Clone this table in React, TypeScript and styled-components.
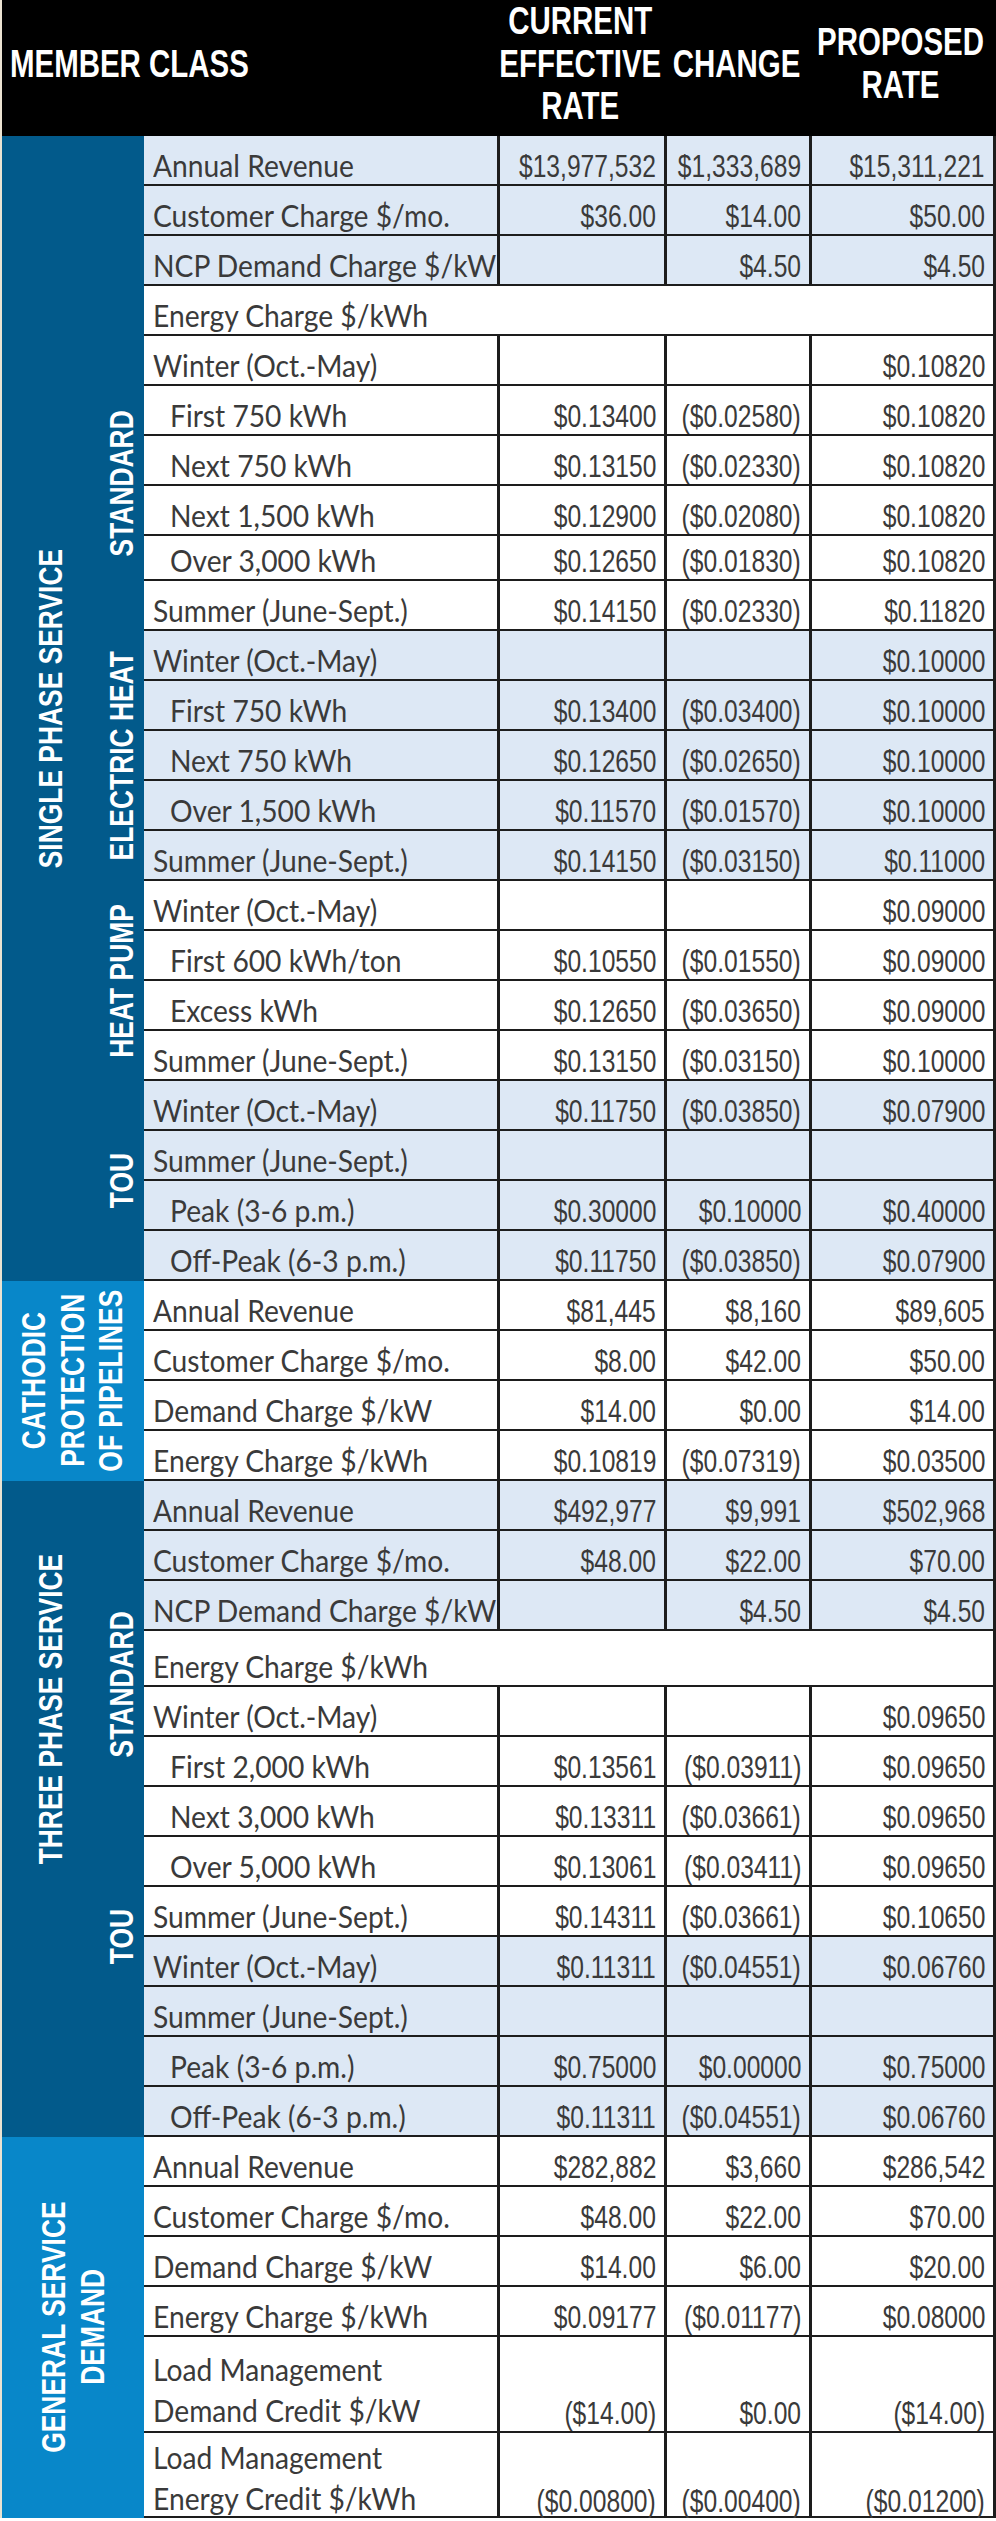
import React from 'react';
import styled, { createGlobalStyle } from 'styled-components';

const C = {
  dark: '#025a8b',
  bright: '#0887c9',
  tint: '#dde8f5',
  line: '#1d1d1d',
  text: '#3a3a3a',
  edge: '#ebe3d2',
};

const ARIAL = '"Liberation Sans", Arial, sans-serif';
const HUMAN = 'Lato, "Open Sans", "Liberation Sans", sans-serif';

const GlobalStyle = createGlobalStyle`
  html, body { margin: 0; padding: 0; background: #ffffff; }
  body { font-family: ${HUMAN}; }
`;

const Page = styled.div`
  width: 996px;
  box-sizing: border-box;
  border-left: 2px solid ${C.edge};
  background: #ffffff;
`;

const Header = styled.header`
  display: grid;
  grid-template-columns: 495px 167px 145px 184px 3px;
  height: 136px;
  background: #000000;
  color: #ffffff;
  font-family: ${ARIAL};
  font-weight: 700;
  font-size: 39px;
  line-height: 42.5px;
`;

const HeadCell = styled.div<{ $left?: boolean }>`
  display: flex;
  align-items: center;
  justify-content: ${(p) => (p.$left ? 'flex-start' : 'center')};
  text-align: center;
  padding: 0 0 12px ${(p) => (p.$left ? '8px' : '0')};
  white-space: nowrap;
  min-width: 0;
`;

const HeadText = styled.span<{ $left?: boolean }>`
  display: inline-block;
  transform: scaleX(0.755);
  transform-origin: ${(p) => (p.$left ? 'left center' : 'center center')};
`;

const Group = styled.section`
  display: flex;
`;

const Side = styled.div<{ $tone: 'dark' | 'bright'; $rows: string }>`
  width: 142px;
  flex: none;
  display: grid;
  grid-template-columns: 98px 44px;
  grid-template-rows: ${(p) => p.$rows};
  background: ${(p) => (p.$tone === 'dark' ? C.dark : C.bright)};
  color: #ffffff;
  font-family: ${ARIAL};
  font-weight: 700;
  font-size: 33px;
  line-height: 38.5px;
`;

const SideSlot = styled.div<{ $col: string; $row: string }>`
  grid-column: ${(p) => p.$col};
  grid-row: ${(p) => p.$row};
  display: flex;
  align-items: center;
  justify-content: center;
  min-height: 0;
  overflow: visible;
`;

const Vertical = styled.span`
  writing-mode: vertical-rl;
  transform: rotate(180deg) scaleY(0.8);
  text-align: center;
  white-space: nowrap;
`;

const Rows = styled.div`
  flex: 1;
  display: flex;
  flex-direction: column;
  border-right: 3px solid ${C.line};
`;

const Row = styled.div<{ $h: number; $tint?: boolean; $span?: boolean }>`
  display: grid;
  grid-template-columns: ${(p) => (p.$span ? '1fr' : '353px 167px 145px 184px')};
  height: ${(p) => p.$h}px;
  box-sizing: border-box;
  border-bottom: 2px solid ${C.line};
  background: ${(p) => (p.$tint ? C.tint : '#ffffff')};
  color: ${C.text};
`;

const LabelCell = styled.div<{ $indent?: boolean; $double?: boolean; $padTop?: number }>`
  display: flex;
  align-items: ${(p) => (p.$double ? 'flex-start' : 'flex-end')};
  padding: ${(p) => (p.$double ? `${p.$padTop ?? 12}px 0 0` : '0 0 3px')}
    ${(p) => (p.$indent ? '26px' : '9px')};
  font-family: ${HUMAN};
  font-size: 31px;
  line-height: ${(p) => (p.$double ? '41px' : '32px')};
  white-space: nowrap;
  min-width: 0;
`;

const LabelText = styled.span`
  display: inline-block;
  transform: scaleX(0.91);
  transform-origin: left center;
`;

const ValueCell = styled.div`
  display: flex;
  align-items: flex-end;
  justify-content: flex-end;
  border-left: 3px solid ${C.line};
  padding: 0 8px 2px 0;
  font-family: ${ARIAL};
  font-size: 32px;
  line-height: 32px;
  white-space: nowrap;
  min-width: 0;
`;

const Num = styled.span`
  display: inline-block;
  transform: scaleX(0.77);
  transform-origin: right center;
`;

type RowData = {
  label: string | [string, string];
  indent?: boolean;
  span?: boolean;
  values?: [string, string, string];
  h?: number;
  tint?: boolean;
  padTop?: number;
};

type Sub = { label: string; from: number; to: number };

type GroupData = {
  tone: 'dark' | 'bright';
  main: string[];
  mainFrom: number;
  mainTo: number;
  wide?: boolean;
  subs: Sub[];
  rows: RowData[];
};

const E: [string, string, string] = ['', '', ''];

const groups: GroupData[] = [
  {
    tone: 'dark',
    main: ['SINGLE PHASE SERVICE'],
    mainFrom: 1,
    mainTo: 23,
    subs: [
      { label: 'STANDARD', from: 5, to: 10 },
      { label: 'ELECTRIC HEAT', from: 11, to: 15 },
      { label: 'HEAT PUMP', from: 16, to: 19 },
      { label: 'TOU', from: 20, to: 23 },
    ],
    rows: [
      { label: 'Annual Revenue', values: ['$13,977,532', '$1,333,689', '$15,311,221'], tint: true },
      { label: 'Customer Charge $/mo.', values: ['$36.00', '$14.00', '$50.00'], tint: true },
      { label: 'NCP Demand Charge $/kW', values: ['', '$4.50', '$4.50'], tint: true },
      { label: 'Energy Charge $/kWh', span: true },
      { label: 'Winter (Oct.-May)', values: ['', '', '$0.10820'] },
      { label: 'First 750 kWh', indent: true, values: ['$0.13400', '($0.02580)', '$0.10820'] },
      { label: 'Next 750 kWh', indent: true, values: ['$0.13150', '($0.02330)', '$0.10820'] },
      { label: 'Next 1,500 kWh', indent: true, values: ['$0.12900', '($0.02080)', '$0.10820'] },
      { label: 'Over 3,000 kWh', indent: true, values: ['$0.12650', '($0.01830)', '$0.10820'], h: 45 },
      { label: 'Summer (June-Sept.)', values: ['$0.14150', '($0.02330)', '$0.11820'] },
      { label: 'Winter (Oct.-May)', values: ['', '', '$0.10000'], tint: true },
      { label: 'First 750 kWh', indent: true, values: ['$0.13400', '($0.03400)', '$0.10000'], tint: true },
      { label: 'Next 750 kWh', indent: true, values: ['$0.12650', '($0.02650)', '$0.10000'], tint: true },
      { label: 'Over 1,500 kWh', indent: true, values: ['$0.11570', '($0.01570)', '$0.10000'], tint: true },
      { label: 'Summer (June-Sept.)', values: ['$0.14150', '($0.03150)', '$0.11000'], tint: true },
      { label: 'Winter (Oct.-May)', values: ['', '', '$0.09000'] },
      { label: 'First 600 kWh/ton', indent: true, values: ['$0.10550', '($0.01550)', '$0.09000'] },
      { label: 'Excess kWh', indent: true, values: ['$0.12650', '($0.03650)', '$0.09000'] },
      { label: 'Summer (June-Sept.)', values: ['$0.13150', '($0.03150)', '$0.10000'] },
      { label: 'Winter (Oct.-May)', values: ['$0.11750', '($0.03850)', '$0.07900'], tint: true },
      { label: 'Summer (June-Sept.)', values: E, tint: true },
      { label: 'Peak (3-6 p.m.)', indent: true, values: ['$0.30000', '$0.10000', '$0.40000'], tint: true },
      { label: 'Off-Peak (6-3 p.m.)', indent: true, values: ['$0.11750', '($0.03850)', '$0.07900'], tint: true },
    ],
  },
  {
    tone: 'bright',
    main: ['CATHODIC', 'PROTECTION', 'OF PIPELINES'],
    mainFrom: 1,
    mainTo: 4,
    wide: true,
    subs: [],
    rows: [
      { label: 'Annual Revenue', values: ['$81,445', '$8,160', '$89,605'] },
      { label: 'Customer Charge $/mo.', values: ['$8.00', '$42.00', '$50.00'] },
      { label: 'Demand Charge $/kW', values: ['$14.00', '$0.00', '$14.00'] },
      { label: 'Energy Charge $/kWh', values: ['$0.10819', '($0.07319)', '$0.03500'] },
    ],
  },
  {
    tone: 'dark',
    main: ['THREE PHASE SERVICE'],
    mainFrom: 1,
    mainTo: 9,
    subs: [
      { label: 'STANDARD', from: 3, to: 6 },
      { label: 'TOU', from: 9, to: 10 },
    ],
    rows: [
      { label: 'Annual Revenue', values: ['$492,977', '$9,991', '$502,968'], tint: true },
      { label: 'Customer Charge $/mo.', values: ['$48.00', '$22.00', '$70.00'], tint: true },
      { label: 'NCP Demand Charge $/kW', values: ['', '$4.50', '$4.50'], tint: true },
      { label: 'Energy Charge $/kWh', span: true, h: 56 },
      { label: 'Winter (Oct.-May)', values: ['', '', '$0.09650'] },
      { label: 'First 2,000 kWh', indent: true, values: ['$0.13561', '($0.03911)', '$0.09650'] },
      { label: 'Next 3,000 kWh', indent: true, values: ['$0.13311', '($0.03661)', '$0.09650'] },
      { label: 'Over 5,000 kWh', indent: true, values: ['$0.13061', '($0.03411)', '$0.09650'] },
      { label: 'Summer (June-Sept.)', values: ['$0.14311', '($0.03661)', '$0.10650'] },
      { label: 'Winter (Oct.-May)', values: ['$0.11311', '($0.04551)', '$0.06760'], tint: true },
      { label: 'Summer (June-Sept.)', values: E, tint: true },
      { label: 'Peak (3-6 p.m.)', indent: true, values: ['$0.75000', '$0.00000', '$0.75000'], tint: true },
      { label: 'Off-Peak (6-3 p.m.)', indent: true, values: ['$0.11311', '($0.04551)', '$0.06760'], tint: true },
    ],
  },
  {
    tone: 'bright',
    main: ['GENERAL SERVICE', 'DEMAND'],
    mainFrom: 1,
    mainTo: 6,
    wide: true,
    subs: [],
    rows: [
      { label: 'Annual Revenue', values: ['$282,882', '$3,660', '$286,542'] },
      { label: 'Customer Charge $/mo.', values: ['$48.00', '$22.00', '$70.00'] },
      { label: 'Demand Charge $/kW', values: ['$14.00', '$6.00', '$20.00'] },
      { label: 'Energy Charge $/kWh', values: ['$0.09177', '($0.01177)', '$0.08000'] },
      {
        label: ['Load Management', 'Demand Credit $/kW'],
        values: ['($14.00)', '$0.00', '($14.00)'],
        h: 96,
        padTop: 12,
      },
      {
        label: ['Load Management', 'Energy Credit $/kWh'],
        values: ['($0.00800)', '($0.00400)', '($0.01200)'],
        h: 85,
        padTop: 4,
      },
    ],
  },
];

const ROW_H = 50;

function Label({ text }: { text: string | [string, string] }) {
  if (typeof text === 'string') return <LabelText>{text}</LabelText>;
  return (
    <LabelText>
      {text[0]}
      <br />
      {text[1]}
    </LabelText>
  );
}

function TableGroup({ g }: { g: GroupData }) {
  const heights = g.rows.map((r) => r.h ?? ROW_H);
  const template = heights.map((h) => `${h}px`).join(' ');
  return (
    <Group>
      <Side $tone={g.tone} $rows={template}>
        <SideSlot $col={g.wide ? '1 / 3' : '1 / 2'} $row={`${g.mainFrom} / ${g.mainTo + 1}`}>
          <Vertical>
            {g.main.map((line, i) => (
              <React.Fragment key={line}>
                {i > 0 && <br />}
                {line}
              </React.Fragment>
            ))}
          </Vertical>
        </SideSlot>
        {g.subs.map((s) => (
          <SideSlot key={s.label} $col="2 / 3" $row={`${s.from} / ${s.to + 1}`}>
            <Vertical>{s.label}</Vertical>
          </SideSlot>
        ))}
      </Side>
      <Rows>
        {g.rows.map((r, i) => {
          const double = Array.isArray(r.label);
          return (
            <Row key={i} $h={heights[i]} $tint={r.tint} $span={r.span}>
              <LabelCell $indent={r.indent} $double={double} $padTop={r.padTop}>
                <Label text={r.label} />
              </LabelCell>
              {!r.span &&
                (r.values ?? E).map((v, j) => (
                  <ValueCell key={j}>
                    <Num>{v}</Num>
                  </ValueCell>
                ))}
            </Row>
          );
        })}
      </Rows>
    </Group>
  );
}

export default function App() {
  return (
    <>
      <GlobalStyle />
      <Page>
        <Header>
          <HeadCell $left>
            <HeadText $left>MEMBER CLASS</HeadText>
          </HeadCell>
          <HeadCell>
            <HeadText>
              CURRENT
              <br />
              EFFECTIVE
              <br />
              RATE
            </HeadText>
          </HeadCell>
          <HeadCell>
            <HeadText>CHANGE</HeadText>
          </HeadCell>
          <HeadCell>
            <HeadText>
              PROPOSED
              <br />
              RATE
            </HeadText>
          </HeadCell>
          <div />
        </Header>
        {groups.map((g) => (
          <TableGroup key={g.main.join(' ')} g={g} />
        ))}
      </Page>
    </>
  );
}
